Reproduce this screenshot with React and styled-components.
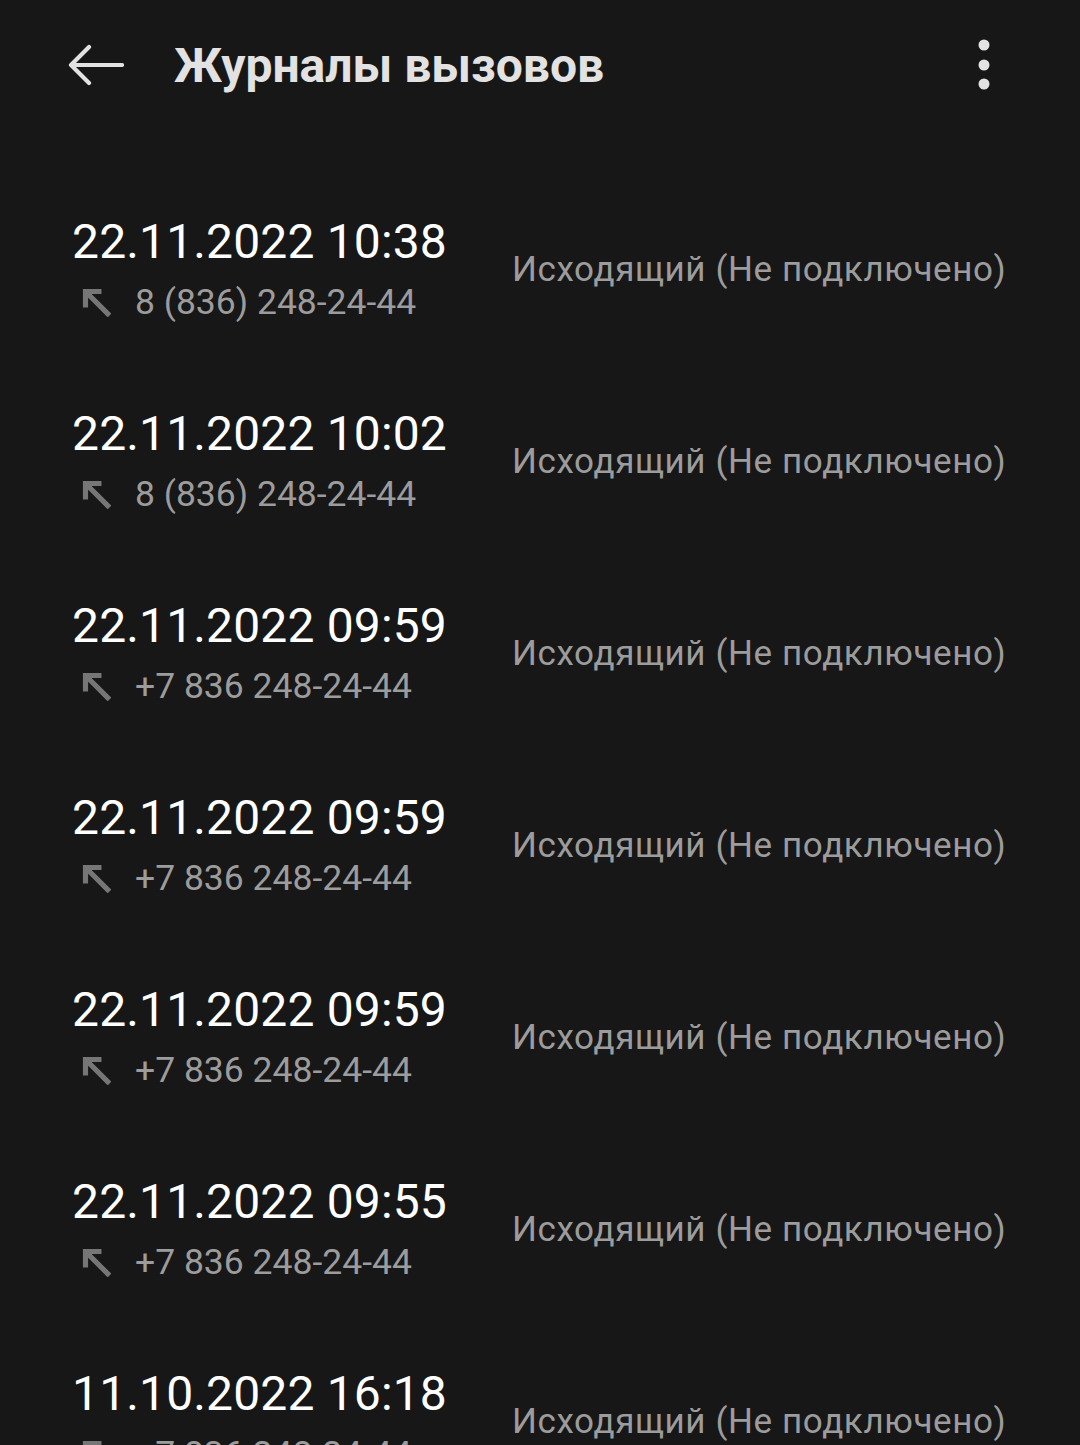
import React from "react";
import styled, { createGlobalStyle } from "styled-components";

const GlobalStyle = createGlobalStyle`
  html, body {
    margin: 0;
    padding: 0;
    background: #171717;
  }
  body {
    font-family: Roboto, "Noto Sans", sans-serif;
    overflow: hidden;
  }
`;

const Screen = styled.div`
  width: 1080px;
  height: 1445px;
  background: #171717;
  overflow: hidden;
`;

const Header = styled.header`
  height: 130px;
  display: flex;
  align-items: center;
  padding: 0 0 0 68px;
  box-sizing: border-box;
`;

const IconButton = styled.div`
  display: flex;
  align-items: center;
  justify-content: center;
  color: #e2e2e2;
`;

const Title = styled.h1`
  margin: 0 0 0 50px;
  flex: 1;
  font-size: 48px;
  font-weight: 700;
  color: #e2e2e2;
`;

const MoreButton = styled(IconButton)`
  width: 30px;
  margin-right: 81px;
`;

const List = styled.div`
  padding-top: 42px;
`;

const Row = styled.div`
  height: 192px;
  display: flex;
  align-items: center;
  padding: 0 70px 0 72px;
  box-sizing: border-box;
`;

const Left = styled.div`
  width: 440px;
  display: flex;
  flex-direction: column;
  gap: 12px;
`;

const DateText = styled.div`
  font-size: 48px;
  line-height: 56px;
  color: #ffffff;
  letter-spacing: 0.15px;
  white-space: nowrap;
`;

const PhoneLine = styled.div`
  display: flex;
  align-items: center;
  height: 40px;
  padding-left: 9px;
`;

const Phone = styled.span`
  font-size: 35.5px;
  line-height: 40px;
  color: #9c9c9c;
  margin-left: 24px;
  white-space: nowrap;
`;

const Status = styled.div`
  font-size: 35px;
  line-height: 40px;
  color: #9c9c9c;
  letter-spacing: 0.6px;
  white-space: nowrap;
  margin-top: 4px;
`;

const BackArrow = () => (
  <svg width="56" height="42" viewBox="0 0 56 42" fill="none">
    <path
      d="M54 21H4M21 3L3 21L21 39"
      stroke="currentColor"
      strokeWidth="4.2"
      strokeLinecap="round"
      strokeLinejoin="round"
    />
  </svg>
);

const Dots = () => (
  <svg width="14" height="52" viewBox="0 0 14 52">
    <circle cx="7" cy="6" r="5.5" fill="#e2e2e2" />
    <circle cx="7" cy="26" r="5.5" fill="#e2e2e2" />
    <circle cx="7" cy="45" r="5.5" fill="#e2e2e2" />
  </svg>
);

const OutgoingIcon = () => (
  <svg width="30" height="30" viewBox="0 0 30 30" fill="none">
    <path
      d="M28.5 28.5L5 5M2 4.5H20.5M4.5 2V20.5"
      stroke="#767676"
      strokeWidth="5.2"
      strokeLinecap="butt"
    />
  </svg>
);

const calls = [
  { date: "22.11.2022 10:38", phone: "8 (836) 248-24-44" },
  { date: "22.11.2022 10:02", phone: "8 (836) 248-24-44" },
  { date: "22.11.2022 09:59", phone: "+7 836 248-24-44" },
  { date: "22.11.2022 09:59", phone: "+7 836 248-24-44" },
  { date: "22.11.2022 09:59", phone: "+7 836 248-24-44" },
  { date: "22.11.2022 09:55", phone: "+7 836 248-24-44" },
  { date: "11.10.2022 16:18", phone: "+7 836 248-24-44" },
];

const App = () => {
  return (
    <Screen>
      <GlobalStyle />
      <Header>
        <IconButton>
          <BackArrow />
        </IconButton>
        <Title>Журналы вызовов</Title>
        <MoreButton>
          <Dots />
        </MoreButton>
      </Header>
      <List>
        {calls.map((call, i) => (
          <Row key={i}>
            <Left>
              <DateText>{call.date}</DateText>
              <PhoneLine>
                <OutgoingIcon />
                <Phone>{call.phone}</Phone>
              </PhoneLine>
            </Left>
            <Status>Исходящий (Не подключено)</Status>
          </Row>
        ))}
      </List>
    </Screen>
  );
};

export default App;
